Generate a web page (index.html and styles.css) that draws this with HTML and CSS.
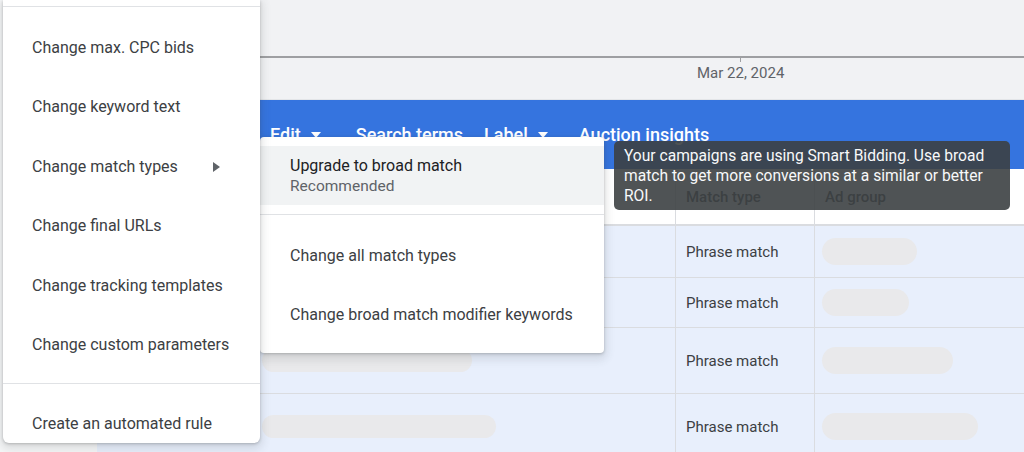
FILE: index.html
```html
<!DOCTYPE html>
<html lang="en">
<head>
<meta charset="utf-8">
<title>Keywords – Edit menu</title>
<link rel="stylesheet" href="styles.css">
</head>
<body>
<div class="page">
  <aside class="sidebar"></aside>
  <main class="main">
    <section class="chart">
      <div class="plot"></div>
      <div class="axis">
        <div class="axis-mark"><span class="tick"></span><span class="date">Mar 22, 2024</span></div>
      </div>
    </section>
    <nav class="toolbar">
      <span class="tool tool-edit">Edit <svg class="caret" width="10" height="6" viewBox="0 0 10 6"><path d="M0 0h10L5 6z" fill="#fff"/></svg></span>
      <span class="tool tool-search">Search terms</span>
      <span class="tool tool-label">Label <svg class="caret" width="10" height="6" viewBox="0 0 10 6"><path d="M0 0h10L5 6z" fill="#fff"/></svg></span>
      <span class="tool">Auction insights</span>
    </nav>
    <div class="table">
      <div class="row head">
        <div class="cell"></div>
        <div class="cell line"></div>
        <div class="cell line">Match type</div>
        <div class="cell">Ad group</div>
      </div>
      <div class="row sel r1">
        <div class="cell"></div>
        <div class="cell line"></div>
        <div class="cell line">Phrase match</div>
        <div class="cell"><span class="pill" style="width:95px"></span></div>
      </div>
      <div class="row sel r2">
        <div class="cell"></div>
        <div class="cell line"></div>
        <div class="cell line">Phrase match</div>
        <div class="cell"><span class="pill" style="width:87px"></span></div>
      </div>
      <div class="row sel r3">
        <div class="cell"></div>
        <div class="cell line kw"><span class="pill pill-kw" style="width:210px"></span></div>
        <div class="cell line">Phrase match</div>
        <div class="cell"><span class="pill" style="width:131px"></span></div>
      </div>
      <div class="row sel r4">
        <div class="cell"></div>
        <div class="cell line kw"><span class="pill pill-kw" style="width:234px"></span></div>
        <div class="cell line">Phrase match</div>
        <div class="cell"><span class="pill" style="width:156px"></span></div>
      </div>
    </div>
  </main>
</div>

<div class="menu">
  <div class="menu-cut"></div>
  <div class="divider"></div>
  <div class="menu-list">
    <div class="item">Change max. CPC bids</div>
    <div class="item">Change keyword text</div>
    <div class="item has-sub">Change match types <svg class="sub-arrow" width="7" height="10" viewBox="0 0 7 10"><path d="M0 0l7 5-7 5z" fill="#5f6368"/></svg></div>
    <div class="item">Change final URLs</div>
    <div class="item">Change tracking templates</div>
    <div class="item">Change custom parameters</div>
  </div>
  <div class="divider"></div>
  <div class="item last">Create an automated rule</div>
</div>

<div class="submenu">
  <div class="sub-item active">
    <span class="sub-title">Upgrade to broad match</span>
    <span class="sub-note">Recommended</span>
  </div>
  <div class="divider sub-divider"></div>
  <div class="sub-item">Change all match types</div>
  <div class="sub-item">Change broad match modifier keywords</div>
</div>

<div class="tooltip">Your campaigns are using Smart Bidding. Use broad<br>match to get more conversions at a similar or better<br>ROI.</div>
</body>
</html>
```
FILE: styles.css
```css
* { box-sizing: border-box; }
html, body { margin: 0; padding: 0; }
body {
  width: 1024px;
  height: 452px;
  overflow: hidden;
  font-family: Roboto, "Liberation Sans", Arial, sans-serif;
  background: #fff;
  position: relative;
}
.page { display: flex; height: 452px; }
.sidebar { width: 97px; flex: none; background: #f6f7f8; }
.main { flex: 1; display: flex; flex-direction: column; min-width: 0; }

/* chart */
.chart { height: 100px; background: #f1f2f4; border-bottom: 1px solid #e3e5e8; flex: none; }
.plot { height: 58px; border-bottom: 2px solid #9e9fa2; }
.axis { display: flex; padding-left: 600px; }
.axis-mark { display: flex; flex-direction: column; align-items: center; }
.tick { width: 1px; height: 4px; background: #9e9fa2; }
.date { font-size: 15px; line-height: 20px; color: #5f6368; margin-top: 1px; }

/* toolbar */
.toolbar {
  height: 69px; flex: none;
  background: #3574df;
  display: flex; align-items: center;
  padding-left: 173px;
  color: #fff; font-size: 18px; font-weight: 500;
}
.tool { display: inline-flex; align-items: center; white-space: nowrap; }
.caret { margin-left: 10px; }
.tool-edit { margin-right: 35px; }
.tool-search { margin-right: 21px; }
.tool-label { margin-right: 31px; }

/* table */
.table { flex: 1; background: #e8effc; }
.row {
  display: grid;
  grid-template-columns: 153px 426px 139px 1fr;
  border-bottom: 1px solid #dadce0;
}
.row.head { height: 57px; background: #fff; border-bottom: 2px solid #dadce0; font-weight: 500; color: #3c4043; }
.r1 { height: 52px; }
.r2 { height: 50px; }
.r3 { height: 66px; }
.r4 { height: 66px; }
.cell {
  display: flex; align-items: center;
  padding-left: 10px;
  font-size: 15px; color: #3c4043;
}
.cell.line { border-right: 1px solid #dadce0; }
.cell.kw { padding-left: 12px; }
.pill { display: block; height: 27px; border-radius: 14px; background: #e9e9eb; margin-left: -3px; }
.pill-kw { height: 23px; margin-left: 0; }

/* main menu */
.menu {
  position: absolute; left: 3px; top: 0;
  width: 257px; height: 443px;
  background: #fff;
  border-radius: 0 0 6px 6px;
  box-shadow: 0 1px 3px rgba(60,64,67,.3), 0 4px 8px 3px rgba(60,64,67,.12);
  color: #3c4043; font-size: 16px;
  z-index: 3;
}
.menu-cut { height: 6px; }
.divider { height: 1px; background: #e0e2e5; }
.menu-list { padding: 11px 0 8px; }
.item {
  height: 59.5px; display: flex; align-items: center;
  padding-left: 29px; line-height: 20px; white-space: nowrap;
}
.sub-arrow { margin-left: 35px; }
.item.last { align-items: flex-start; padding-top: 30px; height: 59px; }

/* submenu */
.submenu {
  position: absolute; left: 260px; top: 137px;
  width: 344px; height: 216px;
  background: #fff; border-radius: 4px;
  padding: 9px 0;
  box-shadow: 0 1px 3px rgba(60,64,67,.3), 0 4px 8px 3px rgba(60,64,67,.12);
  color: #202124; font-size: 16px;
  z-index: 2;
}
.sub-item {
  height: 59px; display: flex; flex-direction: column; justify-content: center;
  padding-left: 30px; line-height: 20px; white-space: nowrap; color: #3c4043;
}
.sub-item.active { background: #f1f3f4; padding-top: 1px; }
.sub-title { color: #202124; }
.sub-note { font-size: 15.5px; color: #5f6368; }
.sub-divider { margin: 9px 0 11px; }

/* tooltip */
.tooltip {
  position: absolute; left: 614px; top: 141px;
  width: 396px; height: 69px;
  padding: 5px 10px 4px;
  background: rgba(60,64,67,.9);
  border-radius: 5px;
  color: #f8f9fa; font-size: 15.6px; line-height: 20px;
  white-space: nowrap;
  z-index: 4;
}
```
